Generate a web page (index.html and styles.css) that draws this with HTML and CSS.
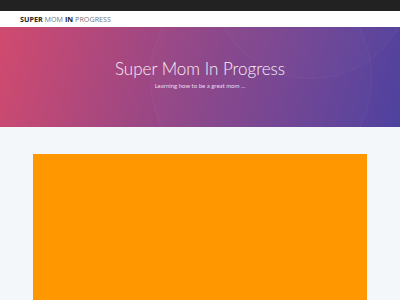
FILE: index.html
```html
<!DOCTYPE html>
<html>
<head>
<meta charset="utf-8">
<link rel="stylesheet" href="styles.css">
</head>
<body>
<div class="topbar"></div>
<nav class="nav"><span class="b">SUPER</span> <span class="l">MOM</span> <span class="b">IN</span> <span class="l">PROGRESS</span></nav>
<header class="hero">
  <div class="circle c1"></div>
  <div class="circle c2"></div>
  <h1 class="title">Super Mom In Progress</h1>
  <p class="sub">Learning how to be a great mom ...</p>
</header>
<main class="main">
  <div class="feature"></div>
</main>
</body>
</html>
```
FILE: styles.css
```css
html, body { margin: 0; padding: 0; }
body { background: #f3f7fa; font-family: "Open Sans", sans-serif; width: 400px; height: 300px; overflow: hidden; }
.topbar { height: 11px; background: #222222; }
.nav { height: 16px; background: #ffffff; padding-left: 20px; font-size: 7.2px; line-height: 17px; color: #222; }
.nav .b { font-weight: 700; color: #222; }
.nav .l { font-weight: 400; color: #777; }
.hero { position: relative; overflow: hidden; height: 100px; box-sizing: border-box; padding-bottom: 6px; background: linear-gradient(105deg, #d14a6e 0%, #9a4785 40%, #7a4590 65%, #4e42a0 100%); display: flex; flex-direction: column; align-items: center; justify-content: center; }
.circle { position: absolute; border-radius: 50%; border: 1px solid rgba(255,255,255,0.03); background: rgba(255,255,255,0.015); }
.c1 { width: 220px; height: 220px; left: 150px; top: -60px; }
.c2 { width: 200px; height: 200px; left: 210px; top: -150px; }
.title { position: relative; margin: 0; font-family: Lato, sans-serif; font-weight: 300; font-size: 17px; color: #f7eef6; line-height: 20px; }
.sub { position: relative; margin: 3px 0 0; font-family: Lato, sans-serif; font-size: 6px; color: #ecdcec; line-height: 8px; }
.main { padding: 27px 33px 0; }
.feature { height: 200px; background: #ff9800; }
```
